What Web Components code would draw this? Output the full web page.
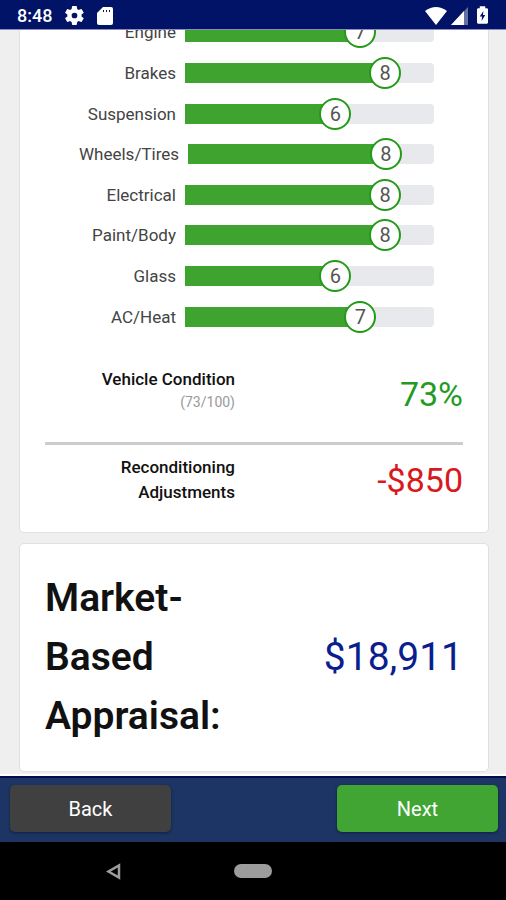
<!DOCTYPE html>
<html lang="en">
<head>
<meta charset="utf-8">
<meta name="viewport" content="width=device-width, initial-scale=1">
<title>Appraisal</title>
<style>
  body {
    margin: 0;
    font-family: Roboto, "Liberation Sans", sans-serif;
    color: #111;
  }
</style>
</head>
<body>
<appraisal-screen>
  <status-bar slot="top" time="8:48"></status-bar>
  <info-card>
    <score-list>
      <score-row label="Engine" value="7"></score-row>
      <score-row label="Brakes" value="8"></score-row>
      <score-row label="Suspension" value="6"></score-row>
      <score-row label="Wheels/Tires" value="8"></score-row>
      <score-row label="Electrical" value="8"></score-row>
      <score-row label="Paint/Body" value="8"></score-row>
      <score-row label="Glass" value="6"></score-row>
      <score-row label="AC/Heat" value="7"></score-row>
    </score-list>
    <summary-row class="good" note="(73/100)" amount="73%">Vehicle Condition</summary-row>
    <summary-row class="bad" amount="-$850">Reconditioning Adjustments</summary-row>
  </info-card>
  <info-card>
    <market-price amount="$18,911">Market-Based Appraisal:</market-price>
  </info-card>
  <action-bar slot="bottom"></action-bar>
  <system-nav slot="bottom"></system-nav>
</appraisal-screen>

<script>
const define = (name, html, setup) => {
  const template = document.createElement("template");
  template.innerHTML = html;
  customElements.define(name, class extends HTMLElement {
    constructor() {
      super();
      this.attachShadow({ mode: "open" });
      this.shadowRoot.appendChild(template.content.cloneNode(true));
    }
    connectedCallback() {
      if (setup) setup(this, this.shadowRoot);
    }
  });
};

// column-reverse keeps the page scrolled to its end
define("appraisal-screen", /*html*/`
<style>
  :host {
    display: flex;
    flex-direction: column;
    height: 100vh;
    background: #efefef;
  }
  main {
    flex: 1;
    min-height: 0;
    display: flex;
    flex-direction: column-reverse;
    overflow-y: auto;
    scrollbar-width: none;
    border-bottom: 2px solid #fff;
  }
  .cards {
    flex: none;
    display: flex;
    flex-direction: column;
    gap: 10px;
    padding: 0 17px 2px 19px;
  }
</style>
<slot name="top"></slot>
<main><div class="cards"><slot></slot></div></main>
<slot name="bottom"></slot>
`);

define("status-bar", /*html*/`
<style>
  :host {
    flex: none;
    display: flex;
    align-items: center;
    box-sizing: border-box;
    height: 30px;
    padding: 2px 18px 0 17px;
    background: #001366;
    border-bottom: 1px solid #8d8bc0;
    color: #fff;
    font-size: 18px;
    font-weight: 500;
  }
  svg { display: block; fill: #fff; }
  .gear { margin-left: 13px; }
  .card { margin-left: 13px; }
  .signal { margin-left: 4px; }
  .battery { margin-left: 9px; }
  .wifi { margin-left: auto; }
</style>
<span></span>
<svg class="gear" width="19" height="19" viewBox="2 2 20 20"><path d="M19.400 13a7.500 7.500 0 0 0 0-2l2.100-1.600a.5.5 0 0 0 .1-.6l-2-3.500a.5.5 0 0 0-.6-.2l-2.500 1a7.300 7.300 0 0 0-1.700-1l-.4-2.600a.5.5 0 0 0-.5-.5h-4a.5.5 0 0 0-.5.5L9 5.100a7.300 7.300 0 0 0-1.700 1l-2.500-1a.5.5 0 0 0-.6.2l-2 3.500a.5.5 0 0 0 .1.600L4.500 11a7.500 7.500 0 0 0 0 2l-2.200 1.600a.5.5 0 0 0-.1.600l2 3.500c.1.200.4.300.6.200l2.500-1a7.300 7.300 0 0 0 1.700 1l.4 2.600c0 .3.200.5.5.5h4c.3 0 .5-.2.5-.5l.4-2.600a7.300 7.300 0 0 0 1.700-1l2.500 1c.2.100.5 0 .6-.2l2-3.500a.5.5 0 0 0-.1-.6zM12 15a3 3 0 1 1 0-6 3 3 0 0 1 0 6z"/></svg>
<svg class="card" width="16" height="20" viewBox="0 0 16 20"><path d="M6 1h8a2 2 0 0 1 2 2v14a2 2 0 0 1-2 2H2a2 2 0 0 1-2-2V7z"/><path d="M6 4h1v2H6zM9 4h1v2H9zM12 4h1v2h-1z" fill="#001366"/></svg>
<svg class="wifi" width="22" height="18" viewBox="0 0 22 18"><path d="M0 4Q11-4 22 4L11 18z"/></svg>
<svg class="signal" width="17" height="18" viewBox="0 0 17 18"><path d="M17 0v18H0z" opacity=".4"/><path d="M13 4v14H0z"/></svg>
<svg class="battery" width="11" height="19" viewBox="0 0 12 20"><path d="M3 2V0h6v2h2l1 1v15l-1 1H1l-1-1V3l1-1z"/><path d="M7 5L3 11h2.500L5 16l4-6.500H6.500z" fill="#001366"/></svg>
`, (host, root) => {
  root.querySelector("span").textContent = host.getAttribute("time");
});

define("info-card", /*html*/`
<style>
  :host {
    display: block;
    padding: 25px;
    background: #fff;
    border: 1px solid #dfdfdf;
    border-radius: 5px;
  }
</style>
<slot></slot>
`);

define("score-list", /*html*/`
<style>
  :host {
    display: grid;
    grid-auto-rows: 1fr;
    height: 325px;
    padding: 0 29px 0 34px;
    margin-bottom: 30px;
  }
</style>
<slot></slot>
`);

define("score-row", /*html*/`
<style>
  :host {
    display: flex;
    align-items: center;
    gap: 9px;
  }
  label {
    min-width: 97px;
    text-align: right;
    font-size: 17px;
    color: #444;
  }
  .track {
    flex: 1;
    position: relative;
    height: 20px;
    border-radius: 0 4px 4px 0;
    background: linear-gradient(#3fa32f, #3fa32f) 0 / calc(var(--score) * 10%) no-repeat #e8e9ec;
  }
  input {
    position: absolute;
    top: 0;
    left: -15px;
    width: calc(100% + 32px);
    height: 100%;
    margin: 0;
    appearance: none;
    background: none;
  }
  input::-webkit-slider-thumb {
    appearance: none;
    box-sizing: border-box;
    width: 32px;
    height: 32px;
    border: 2px solid #239b18;
    border-radius: 50%;
    background: #fff;
  }
  output {
    position: absolute;
    top: 0;
    left: calc(var(--score) * 10% + 1px);
    transform: translateX(-50%);
    line-height: 20px;
    font-size: 20px;
    color: #555;
    pointer-events: none;
  }
</style>
<label for="score"></label>
<div class="track">
  <input id="score" type="range" min="0" max="10">
  <output for="score"></output>
</div>
`, (host, root) => {
  const input = root.querySelector("input");
  const update = () => {
    host.style.setProperty("--score", input.value);
    root.querySelector("output").textContent = input.value;
  };
  root.querySelector("label").textContent = host.getAttribute("label");
  input.value = host.getAttribute("value");
  input.addEventListener("input", update);
  update();
});

define("summary-row", /*html*/`
<style>
  :host {
    display: grid;
    grid-template-columns: 5fr 6fr;
    align-items: center;
    text-align: right;
  }
  :host(.good) {
    --amount: #239b23;
    align-items: end;
    padding-bottom: 29px;
    border-bottom: 3px solid #ccc;
    margin-bottom: 10px;
  }
  :host(.bad) {
    --amount: #d71920;
    padding-bottom: 2px;
  }
  .name {
    font-size: 17px;
    font-weight: 500;
    line-height: 25px;
  }
  small {
    display: block;
    font-size: 14px;
    font-weight: 400;
    line-height: 21px;
    color: #999;
  }
  small:empty { display: none; }
  .amount {
    font-size: 34px;
    line-height: 38px;
    color: var(--amount);
  }
</style>
<div class="name"><slot></slot><small></small></div>
<div class="amount"></div>
`, (host, root) => {
  root.querySelector("small").textContent = host.getAttribute("note") || "";
  root.querySelector(".amount").textContent = host.getAttribute("amount");
});

define("market-price", /*html*/`
<style>
  :host {
    display: grid;
    grid-template-columns: 5fr 6fr;
    align-items: center;
    font-size: 39px;
    line-height: 59px;
  }
  .name { font-weight: 600; }
  .amount {
    text-align: right;
    color: #0b1e8e;
  }
</style>
<div class="name"><slot></slot></div>
<div class="amount"></div>
`, (host, root) => {
  root.querySelector(".amount").textContent = host.getAttribute("amount");
});

define("action-bar", /*html*/`
<style>
  :host {
    flex: none;
    display: flex;
    justify-content: space-between;
    padding: 7px 8px 10px 10px;
    background: #1c3564;
    border-top: 2px solid #000a50;
  }
  button {
    width: 33%;
    height: 47px;
    padding: 0;
    border: 0;
    border-radius: 5px;
    background: #404040;
    color: #fff;
    font: 400 20px Roboto, "Liberation Sans", sans-serif;
    box-shadow: 0 1px 3px rgba(0, 0, 0, .4);
  }
  .next { background: #40a533; }
</style>
<button type="button">Back</button>
<button type="button" class="next">Next</button>
`);

define("system-nav", /*html*/`
<style>
  :host {
    flex: none;
    display: grid;
    grid-template-columns: 1fr auto 1fr;
    align-items: center;
    height: 58px;
    background: #000;
  }
  button {
    padding: 0;
    border: 0;
    background: none;
  }
  .back { justify-self: end; margin-right: 113px; }
  svg { display: block; }
  .home {
    width: 38px;
    height: 14px;
    border-radius: 7px;
    background: #9c9c9c;
  }
</style>
<button type="button" class="back" aria-label="Back">
  <svg width="15" height="17" viewBox="0 0 15 17"><path d="M13 2.500v12L2.500 8.500z" fill="none" stroke="#9c9c9c" stroke-width="2.500"/></svg>
</button>
<button type="button" class="home" aria-label="Home"></button>
`);
</script>
</body>
</html>
